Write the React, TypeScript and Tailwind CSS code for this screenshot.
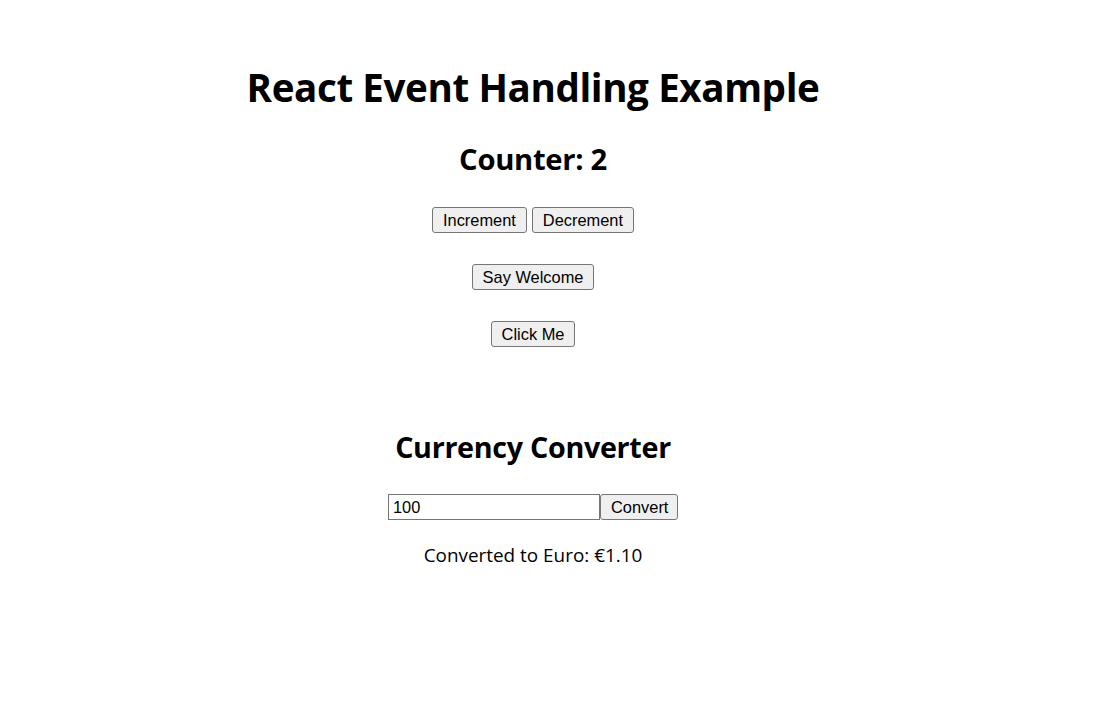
import { useState } from 'react'

const btn =
  'h-[26px] rounded-[3px] border border-[#767676] bg-[#efefef] px-[10px] text-[16.4px] leading-none text-black font-["Liberation_Sans",Arial,sans-serif]'

export default function App() {
  const [count, setCount] = useState(2)
  const [amount, setAmount] = useState('100')
  const [euro, setEuro] = useState('1.10')

  return (
    <div className='min-h-[713px] w-[1066px] bg-white text-black font-["Open_Sans","Noto_Sans",sans-serif]'>
      <div className="flex flex-col items-center pt-[65px]">
        <h1 className="flex h-[46px] items-center text-[38.6px] font-bold tracking-[-0.4px]">
          React Event Handling Example
        </h1>

        <h2 className="mt-[31px] flex h-[35px] items-center text-[29.2px] font-bold tracking-[-0.3px]">
          Counter: {count}
        </h2>

        {/* counter buttons */}
        <div className="mt-[30px] flex gap-[5px]">
          <button className={btn} onClick={() => setCount(count + 1)}>Increment</button>
          <button className={btn} onClick={() => setCount(count - 1)}>Decrement</button>
        </div>

        <button className={`${btn} mt-[31px]`} onClick={() => alert('Welcome!')}>
          Say Welcome
        </button>

        <button className={`${btn} mt-[31px]`} onClick={() => alert('Clicked')}>
          Click Me
        </button>

        {/* ── currency converter ── */}
        <h2 className="mt-[82px] flex h-[35px] items-center text-[28.7px] font-bold tracking-[-0.3px]">
          Currency Converter
        </h2>

        <div className="mt-[30px] flex">
          <input
            value={amount}
            onChange={e => setAmount(e.target.value)}
            className='h-[26px] w-[212px] border border-[#767676] px-[4px] text-[16.4px] text-black outline-none font-["Liberation_Sans",Arial,sans-serif]'
          />
          <button
            className={`${btn} w-[78px] rounded-[2px] bg-[#e9e9e9] px-0`}
            onClick={() => setEuro((parseFloat(amount || '0') * 0.011).toFixed(2))}
          >
            Convert
          </button>
        </div>

        <p className="mt-[23px] flex h-[24px] items-center text-[18.9px]">
          Converted to Euro: €{euro}
        </p>
      </div>
    </div>
  )
}
